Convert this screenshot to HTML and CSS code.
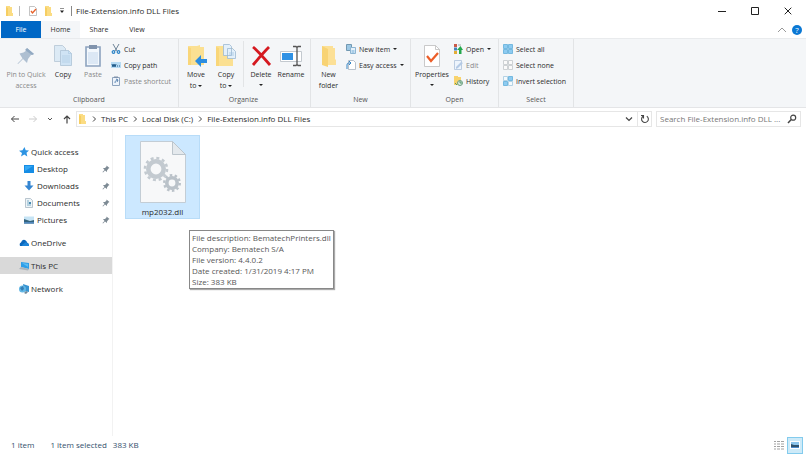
FILE: index.html
```html
<!DOCTYPE html>
<html lang="en">
<head>
<meta charset="utf-8">
<title>File-Extension.info DLL Files</title>
<link rel="stylesheet" href="styles.css">
</head>
<body>
<svg class="defs" aria-hidden="true">
  <symbol id="folder" viewBox="0 0 8 10"><path d="M1 0h4v1h2v6h1v3H1z" fill="#fbdc83"/><path d="M1 1l2 1v8H1z" fill="#f6ce62"/></symbol>
  <symbol id="pin" viewBox="0 0 16 16"><path d="M9 1l6 5-2 1-3 4v3L6 11l-4 4-1-1 4-4-3-4h4l3-3z"/></symbol>
  <symbol id="chevron" viewBox="0 0 6 8"><path d="M2 1.500l2.500 2.500L2 6.500" fill="none" stroke="#444" stroke-width="1"/></symbol>
</svg>
<header class="titlebar">
  <svg class="i10" aria-hidden="true"><use href="#folder"/></svg>
  <span class="bar"></span>
  <button class="plain" aria-label="Properties"><svg class="i10" viewBox="0 0 10 10"><path d="M1.500.5h5l2 2v7h-7z" fill="#fff" stroke="#aaa" stroke-width=".7"/><path d="M3 5l1.500 2L8 3" fill="none" stroke="#e8622b" stroke-width="1.300"/></svg></button>
  <button class="plain" aria-label="New folder"><svg class="i10"><use href="#folder"/></svg></button>
  <button class="plain toolmenu" aria-label="Customize toolbar"><svg class="i6" viewBox="0 0 6 6"><path d="M1 .5h4" stroke="#777" stroke-width=".8"/><path d="M1 2.500h4L3 5z" fill="#222"/></svg></button>
  <span class="bar dark"></span>
  <h1>File-Extension.info DLL Files</h1>
  <div class="window-buttons">
    <button class="plain" aria-label="Minimize"><svg viewBox="0 0 8 8"><path d="M0 4.500h8" stroke="#222"/></svg></button>
    <button class="plain" aria-label="Maximize"><svg viewBox="0 0 8 8"><path d="M.5.5h7v7h-7z" fill="none" stroke="#222"/></svg></button>
    <button class="plain" aria-label="Close"><svg viewBox="0 0 8 8"><path d="M.7.7l6.600 6.600M7.300.7L.7 7.300" stroke="#222"/></svg></button>
  </div>
</header>
<nav class="tabs">
  <button class="file">File</button><button class="active">Home</button><button>Share</button><button>View</button>
  <div class="tab-tools">
    <button class="plain" aria-label="Collapse ribbon"><svg class="i10" viewBox="0 0 10 10"><path d="M1 7l4-4 4 4" fill="none" stroke="#999"/></svg></button>
    <button class="help" aria-label="Help">?</button>
  </div>
</nav>
<section class="ribbon">
  <div class="group clipboard">
    <div class="tools">
      <button class="big wide off"><svg viewBox="0 0 24 24"><path d="M13 4l7 6-3 1-3 4-1 4-4-4-5 5-.5-.5 5-5-3-5 4-1 3-2z" fill="#aebfd1"/><path d="M13 4l7 6-2 1-7-5z" fill="#91a9c2"/></svg><span>Pin to Quick</span><span>access</span></button>
      <button class="big"><svg viewBox="0 0 24 24"><path d="M3.500 1.500h8l3 3v13h-11z" fill="#dceaf5" stroke="#b4c5d3" stroke-width=".8"/><path d="M9.500 6.500h8l3 3v12h-11z" fill="#cfe3f4" stroke="#adc3d5" stroke-width=".8"/><path d="M17.500 6.500v3h3M11 12h8M11 14h8M11 16h8M11 18h8" fill="none" stroke="#adcae2" stroke-width=".7"/></svg><span>Copy</span></button>
      <button class="big off"><svg viewBox="0 0 24 24"><path d="M5 3h14v19H5z" fill="#f3f8fd" stroke="#8da3bf" stroke-width="1.600"/><path d="M8 1h8v4H8z" fill="#8194ad"/><path d="M7 8h10v12H7z" fill="#dce8f5"/></svg><span>Paste</span></button>
      <ul class="small">
        <li><button><svg viewBox="0 0 10 10"><path d="M2 0l4 7M8 0L4 7" stroke="#6f8598"/><g fill="none" stroke="#2b83c6" stroke-width="1.200"><circle cx="2.500" cy="8" r="1.300"/><circle cx="7.500" cy="8" r="1.300"/></g></svg>Cut</button></li>
        <li><button><svg viewBox="0 0 10 10"><path d="M0 2h10v6H0z" fill="#b7dbf3"/><path d="M1 4l1 3 1-3 1 3 1-3M6 6h1M8 6h1" fill="none" stroke="#235d8b"/></svg>Copy path</button></li>
        <li><button class="off"><svg viewBox="0 0 10 10"><path d="M1.500 1.500h7v8h-7z" fill="#edf3fa" stroke="#8ea4be"/><path d="M3 .5h4v1.500H3z" fill="#8093ab"/><path d="M4 7c0-2 1-3 3-3M5 3l2 1-1 2" fill="none" stroke="#5c86b2"/></svg>Paste shortcut</button></li>
      </ul>
    </div>
    <h2>Clipboard</h2>
  </div>
  <div class="group organize">
    <div class="tools">
      <button class="big"><svg viewBox="0 0 24 24"><path d="M4 2h9l3-1v2h4v18H4z" fill="#fbe092"/><path d="M4 3l3 1v17H4z" fill="#f9d679"/><path d="M11 17l6-6v4h6v4h-6v4z" fill="#2c8de0"/></svg><span>Move</span><span>to <i class="caret"></i></span></button>
      <button class="big"><svg viewBox="0 0 24 24"><path d="M2 2h12v2h5v18H2z" fill="#fbe092"/><path d="M2 3l3 1v18H2z" fill="#f9d679"/><path d="M9.500.5h6l2 2v9h-8zM13.500 4.500h5l3 3v7h-8z" fill="#e3f0fb" stroke="#9db9d2" stroke-width=".8"/><path d="M15 9h5M15 11h5" stroke="#9bc0df" stroke-width=".7"/></svg><span>Copy</span><span>to <i class="caret"></i></span></button>
      <span class="divider"></span>
      <button class="big"><svg viewBox="0 0 24 24"><path d="M4 3c5 4 10 10 17 18M20 3C14 9 9 15 4 21" fill="none" stroke="#d51920" stroke-width="2.800"/></svg><span>Delete</span><i class="caret"></i></button>
      <button class="big"><svg viewBox="0 0 24 24"><path d="M1.500 7.500h21v10h-21z" fill="#fff" stroke="#c3c9cf"/><path d="M3 9h11v7H3z" fill="#2f91e4"/><path d="M14 2.500h3l1 1 1-1h3M18 3v18M14 21.500h3l1-1 1 1h3" fill="none" stroke="#555" stroke-width="1.300"/></svg><span>Rename</span></button>
    </div>
    <h2>Organize</h2>
  </div>
  <div class="group new">
    <div class="tools">
      <button class="big"><svg viewBox="0 0 24 24"><path d="M5 2h11v2h2v11l1 1v5H5z" fill="#fce096"/><path d="M5 2l6 3v18l-6-2z" fill="#f8d374"/></svg><span>New</span><span>folder</span></button>
      <ul class="small">
        <li><button><svg viewBox="0 0 10 10"><path d="M.5.5h5v6h-5z" fill="#9cc8e5" stroke="#7299b2"/><path d="M4.500 3.500h5v6h-5z" fill="#e6f2fb" stroke="#8db5d2"/><path d="M5.500 6h3v3h-3z" fill="#a9cde7"/></svg>New item <i class="caret"></i></button></li>
        <li><button><svg viewBox="0 0 10 10"><path d="M2.500.5h5l2 2v7h-7z" fill="#fff" stroke="#a8b4bf" stroke-width=".8"/><path d="M1 9V5c0-2 1-2 3-2M3 1l2 2-2 2" fill="none" stroke="#3585c5"/></svg>Easy access <i class="caret"></i></button></li>
      </ul>
    </div>
    <h2>New</h2>
  </div>
  <div class="group open">
    <div class="tools">
      <button class="big"><svg viewBox="0 0 24 24"><path d="M4.500 1.500h11l4 4v17h-15z" fill="#fff" stroke="#bcbcbc" stroke-width=".8"/><path d="M15.500 1.500v4h4" fill="none" stroke="#bcbcbc" stroke-width=".8"/><path d="M7 12l4 5 7-8" fill="none" stroke="#ec5d28" stroke-width="2.200"/></svg><span>Properties</span><i class="caret"></i></button>
      <ul class="small">
        <li><button><svg viewBox="0 0 10 10"><path d="M1 0h3v3H1z" fill="#ca5a48"/><path d="M1 3.500h3v3H1z" fill="#4584bb"/><path d="M1 7h3v3H1z" fill="#e3ae38"/><path d="M5 1h3" stroke="#aaa"/><path d="M6 10V6H4l3.500-4L10 6H8.500v4z" fill="#24a84c"/></svg>Open <i class="caret"></i></button></li>
        <li><button class="off"><svg viewBox="0 0 10 10"><path d="M1.500.5h7v9h-7z" fill="#edf4fc" stroke="#adc1db" stroke-width=".8"/><path d="M3 7l5-5 2 1-5 5-2 1z" fill="#b4cae5"/></svg>Edit</button></li>
        <li><button><svg viewBox="0 0 10 10"><path d="M1 0h4v1h3v8H1z" fill="#f8d36d"/><circle cx="7" cy="7" r="2.500" fill="#dceae0" stroke="#6da083"/><path d="M7 5v2h2M2 7l2 2" fill="none" stroke="#388b58" stroke-width=".8"/></svg>History</button></li>
      </ul>
    </div>
    <h2>Open</h2>
  </div>
  <div class="group select">
    <div class="tools">
      <ul class="small">
        <li><button><svg viewBox="0 0 10 10"><path d="M.5.5h4v4h-4zM5.500.5h4v4h-4zM.5 5.500h4v4h-4zM5.500 5.500h4v4h-4z" fill="#8dcbf1" stroke="#61aeda" stroke-width=".8"/></svg>Select all</button></li>
        <li><button><svg viewBox="0 0 10 10"><path d="M.5.5h4v4h-4zM5.500.5h4v4h-4zM.5 5.500h4v4h-4zM5.500 5.500h4v4h-4z" fill="#fafafa" stroke="#c1c6ca" stroke-width=".8"/></svg>Select none</button></li>
        <li><button><svg viewBox="0 0 10 10"><path d="M.5.5h4v4h-4zM5.500 5.500h4v4h-4z" fill="#f4fafe" stroke="#a3c9df" stroke-width=".8"/><path d="M5.500.5h4v4h-4zM.5 5.500h4v4h-4z" fill="#8dcbf1" stroke="#61aeda" stroke-width=".8"/></svg>Invert selection</button></li>
      </ul>
    </div>
    <h2>Select</h2>
  </div>
</section>
<div class="location">
  <div class="history">
    <button class="plain" aria-label="Back"><svg viewBox="0 0 10 10"><path d="M9 5H1.500M4.500 2l-3 3 3 3" fill="none" stroke="#444" stroke-width="1"/></svg></button>
    <button class="plain" aria-label="Forward" disabled><svg viewBox="0 0 10 10"><path d="M1 5h7.500M5.500 2l3 3-3 3" fill="none" stroke="#ccc"/></svg></button>
    <button class="plain narrow" aria-label="Recent locations"><svg viewBox="0 0 10 10"><path d="M3 4l2 2 2-2" fill="none" stroke="#555" stroke-width="1"/></svg></button>
    <button class="plain" aria-label="Up"><svg viewBox="0 0 10 10"><path d="M5 9.500V2M2 5l3-3 3 3" fill="none" stroke="#444" stroke-width="1.200"/></svg></button>
  </div>
  <div class="address">
    <svg class="i10" aria-hidden="true"><use href="#folder"/></svg>
    <svg class="crumb-arrow" aria-hidden="true"><use href="#chevron"/></svg><a href="#">This PC</a>
    <svg class="crumb-arrow" aria-hidden="true"><use href="#chevron"/></svg><a href="#">Local Disk (C:)</a>
    <svg class="crumb-arrow" aria-hidden="true"><use href="#chevron"/></svg><a href="#">File-Extension.info DLL Files</a>
    <button class="plain push" aria-label="Previous locations"><svg class="i10" viewBox="0 0 10 10"><path d="M2 3.500l3 3 3-3" fill="none" stroke="#444" stroke-width="1.200"/></svg></button>
    <button class="plain refresh" aria-label="Refresh"><svg class="i10" viewBox="0 0 10 10"><path d="M6.800 2.200A3.400 3.400 0 1 1 3 2.300M3.500 4.500V1.500H1" fill="none" stroke="#444" stroke-width="1.100"/></svg></button>
  </div>
  <label class="search"><input type="text" aria-label="Search" placeholder="Search File-Extension.info DLL ..."><svg class="i10" viewBox="0 0 10 10"><circle cx="6.200" cy="3.700" r="2.500" fill="none" stroke="#444" stroke-width="1.200"/><path d="M4.300 5.600L1 9" stroke="#444" stroke-width="1.500"/></svg></label>
</div>
<div class="body">
  <nav class="sidebar">
    <a href="#" class="top"><svg viewBox="0 0 10 10"><path d="M5.500 0l1.200 3.200L10 3.500 7.500 5.700l.8 3.800-3-2L2 9.500l1-3.500L0 3.800l3.500-.5z" fill="#2d94e3"/></svg>Quick access</a>
    <a href="#" class="sub"><svg viewBox="0 0 10 10"><path d="M0 1h10v8H0z" fill="#168de5"/><path d="M1 2h8L1 7z" fill="#35a9f5"/></svg>Desktop<svg class="pin"><use href="#pin"/></svg></a>
    <a href="#" class="sub"><svg viewBox="0 0 10 10"><path d="M3.500 0h3v4.500H9.500L5 9.500.5 4.500h3z" fill="#3586d2"/></svg>Downloads<svg class="pin"><use href="#pin"/></svg></a>
    <a href="#" class="sub"><svg viewBox="0 0 10 10"><path d="M1.500.5h5l2 2v7h-7z" fill="#edf4f8" stroke="#a9b8c3" stroke-width=".8"/><path d="M3 3h2M3 5h4M3 7h4" stroke="#7faec7"/><path d="M5 4h2v2H5z" fill="#4789b0"/></svg>Documents<svg class="pin"><use href="#pin"/></svg></a>
    <a href="#" class="sub"><svg viewBox="0 0 10 10"><path d="M0 1.500h10v7H0z" fill="#c6e4f5"/><path d="M0 4l3 1 3 1 4-1v3.500H0z" fill="#34647e"/><path d="M0 7h10v1.500H0z" fill="#5187bd"/></svg>Pictures<svg class="pin"><use href="#pin"/></svg></a>
    <a href="#" class="root"><svg viewBox="0 0 10 10"><path d="M1 8Q0 5 2 4.500 3 1 6 2q2 1 2 2.500 2 .5 2 3L9.500 8z" fill="#0b68bd"/><path d="M3 8q0-2 2-2.500 2-2 3-.5 2 .5 2 3z" fill="#1c84d8"/></svg>OneDrive</a>
    <a href="#" class="root current"><svg viewBox="0 0 10 10"><path d="M2 1l8 1v6L2 6z" fill="#2e9ee8"/><path d="M2 6l8 2-1 1.500L0 8z" fill="#a9b4bc"/><path d="M3 2l6 1v3z" fill="#5cbcf3"/></svg>This PC</a>
    <a href="#" class="root"><svg viewBox="0 0 10 10"><path d="M4 0l6 2v6L5 7z" fill="#3894d2"/><circle cx="3.500" cy="5" r="3.500" fill="#62b7e5"/><path d="M1 4l3-2 1 3-2 2z" fill="#347eb6"/><path d="M5 9l2-2 2 1-2 2z" fill="#72899a"/></svg>Network</a>
  </nav>
  <main class="files">
    <button class="tile">
      <svg viewBox="0 0 46 62">
        <path d="M.5.5h32l13 13v48H.5z" fill="#f7f8f9" stroke="#c3cdd5"/>
        <path d="M32.500.5v13h13z" fill="#e4e9ed" stroke="#bcc5cc"/>
        <circle cx="16" cy="28" r="7.700" fill="none" stroke="#c3cad0" stroke-width="4.600"/>
        <circle cx="16" cy="28" r="11" fill="none" stroke="#c3cad0" stroke-width="2.600" stroke-dasharray="2.960 2.800"/>
        <circle cx="32" cy="42" r="5.200" fill="none" stroke="#bac2c9" stroke-width="3.600"/>
        <circle cx="32" cy="42" r="7.800" fill="none" stroke="#bac2c9" stroke-width="2.400" stroke-dasharray="2.500 2.400"/>
      </svg>
      <span>mp2032.dll</span>
    </button>
    <div class="tooltip" role="tooltip">File description: BematechPrinters.dll<br>Company: Bematech S/A<br>File version: 4.4.0.2<br>Date created: 1/31/2019 4:17 PM<br>Size: 383 KB</div>
  </main>
</div>
<footer class="status">
  <span>1 item</span><span class="selected">1 item selected</span><span>383 KB</span>
  <div class="views">
    <button class="plain" aria-label="Details view"><svg class="i10" viewBox="0 0 10 10"><path d="M0 1.500h2M3 1.500h3M7 1.500h3M0 4h2M3 4h3M7 4h3M0 6.500h2M3 6.500h3M7 6.500h3M0 9h2M3 9h3M7 9h3" stroke="#999" stroke-width=".9"/></svg></button>
    <button class="plain on" aria-label="Large icons view"><svg class="i10" viewBox="0 0 10 10"><path d="M0 1h10v8H0z" fill="#fff"/><path d="M1 2h8v3H1z" fill="#8bc4eb"/><path d="M1 4l3 1 5 0v2H1z" fill="#2f526c"/><path d="M1 7h8v1H1z" fill="#4b8acb"/></svg></button>
  </div>
</footer>
</body>
</html>
```
FILE: styles.css
```css
* { box-sizing: border-box; }
body {
  margin: 0;
  min-height: 100vh;
  display: flex;
  flex-direction: column;
  background: #fff;
  color: #2b2b2b;
  font: 8px/12px "Open Sans", "Noto Sans", sans-serif;
}
.defs { position: absolute; width: 0; height: 0; }
svg { display: block; flex: none; }
button { font: inherit; color: inherit; background: none; border: 0; padding: 0; margin: 0; }
a { color: inherit; text-decoration: none; }
h1, h2 { margin: 0; font-weight: 400; font-size: inherit; }
ul { margin: 0; padding: 0; list-style: none; }
.plain { display: flex; align-items: center; justify-content: center; }
.i10 { width: 10px; height: 10px; }
.i6 { width: 6px; height: 6px; }

.titlebar { display: flex; align-items: center; height: 21px; padding: 0 2px 0 4px; }
.titlebar .bar { width: 1px; height: 10px; background: #bbb; margin: 0 8px 0 5px; }
.titlebar .plain + .plain { margin-left: 5px; }
.titlebar .toolmenu { width: 8px; }
.titlebar .bar.dark { background: #888; margin: 0 4px 0 5px; }
.window-buttons { display: flex; margin-left: auto; }
.window-buttons .plain { width: 33px; height: 20px; }
.window-buttons .plain + .plain { margin: 0; }
.window-buttons svg { width: 8px; height: 8px; }

.tabs { display: flex; height: 17px; padding-left: 1px; font-size: 7px; }
.tabs > button { width: 38px; padding: 0; }
.tabs .file { width: 40px; background: #0067c5; color: #fff; }
.tabs .active { width: 39px; background: #f4f6f8; }
.tab-tools { display: flex; align-items: center; gap: 5px; margin-left: auto; padding-right: 4px; }
.tab-tools .help { width: 10px; height: 10px; border-radius: 50%; background: #0a78d4; color: #fff; font-size: 8px; line-height: 10px; }

.ribbon {
  display: flex;
  background: #f4f6f8;
  border-top: 1px solid #e9ebed;
  border-bottom: 1px solid #e4e5e7;
  font-size: 7px;
  line-height: 11px;
}
.group { display: flex; flex-direction: column; padding: 2px 4px 1px; border-right: 1px solid #e2e4e6; }
.group h2 { text-align: center; color: #555; line-height: 12px; margin-top: 1px; }
.tools { display: flex; height: 52px; }
.big { width: 30px; display: flex; flex-direction: column; align-items: center; justify-content: flex-start; padding-top: 3px; white-space: nowrap; }
.big svg { width: 24px; height: 24px; margin-bottom: 1px; }
.big.wide { width: 44px; }
.off { color: #888; }
.small li, .small button { display: flex; align-items: center; height: 16px; white-space: nowrap; }
.small svg { width: 10px; height: 10px; margin-right: 3px; }
.caret { display: inline-block; border: 2px solid transparent; border-top-color: #222; border-bottom: 0; vertical-align: middle; }
.small .caret { margin-left: 3px; }
.big > .caret { margin-top: 4px; }
.divider { width: 1px; height: 46px; margin: 0 2px; background: #e2e4e6; }
.clipboard { width: 179px; }
.clipboard .small { margin-left: 3px; }
.organize { width: 132px; padding-left: 2px; }
.new { width: 100px; }
.new .big { width: 27px; margin-right: 4px; }
.open { width: 88px; }
.open .big { width: 34px; margin-right: 4px; }
.select { width: 75px; }

.location { display: flex; align-items: center; padding: 3px 5px 2px 8px; }
.history { display: flex; align-items: center; gap: 4px; margin-right: 2px; }
.history .plain { width: 14px; }
.history .narrow { width: 12px; }
.history svg { width: 10px; height: 10px; }
.address { display: flex; align-items: center; flex: 1; height: 16px; border: 1px solid #e6e6e6; white-space: nowrap; }
.crumb-arrow { width: 6px; height: 8px; margin: 0 4px; }
.address .push { margin-left: auto; margin-right: 3px; }
.address .refresh { height: 14px; border-left: 1px solid #e6e6e6; padding: 0 1px 0 2px; }
.search { display: flex; align-items: center; width: 145px; height: 16px; margin-left: 4px; border: 1px solid #e6e6e6; padding: 0 3px; }
.search input { flex: 1; min-width: 0; border: 0; padding: 0; font: inherit; background: none; outline: 0; }
.search input::placeholder { color: #777; opacity: 1; }

.body { display: flex; flex: 1; }
.sidebar { width: 113px; padding-top: 14px; border-right: 1px solid #f2f2f2; }
.sidebar a { display: flex; align-items: center; height: 17px; padding: 0 1px 0 19px; }
.sidebar a.sub { padding-left: 24px; }
.sidebar a.root { margin-top: 6px; }
.sidebar a.current { background: #d9d9d9; }
.sidebar svg { width: 10px; height: 10px; margin-right: 2px; }
.sidebar .sub svg { margin-right: 3px; }
.sidebar .sub .pin { width: 8px; height: 8px; margin: 0 1px 0 auto; fill: #7d8a94; }
.files { position: relative; flex: 1; padding: 6px 12px; }
.tile { display: flex; flex-direction: column; align-items: center; width: 75px; height: 84px; padding: 5px 0 0; background: #cce8ff; border: 1px solid #b8dcf8; }
.tile svg { width: 46px; height: 62px; margin-bottom: 3px; }
.tooltip { position: absolute; left: 76px; top: 101px; padding: 1px 2px; line-height: 11px; color: #575757; background: #fff; border: 1px solid #888; box-shadow: 1px 1px 1px #aaa; white-space: nowrap; }

.status { display: flex; align-items: center; height: 18px; padding: 0 3px 0 11px; color: #34506c; }
.status .selected { margin: 0 6px 0 16px; }
.views { display: flex; margin-left: auto; }
.views .plain { width: 16px; height: 17px; }
.views .on { background: #cdeaf8; border: 1px solid #83cbed; }
```
